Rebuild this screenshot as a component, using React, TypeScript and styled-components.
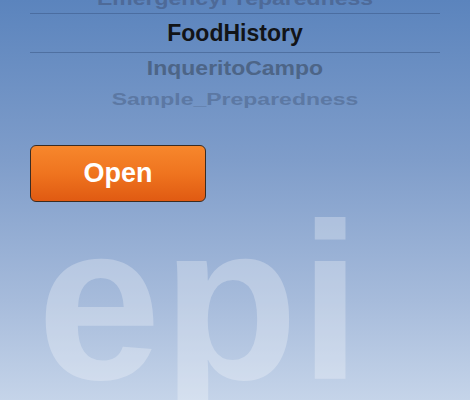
import React from "react";
import styled, { createGlobalStyle } from "styled-components";

const Global = createGlobalStyle`
  html, body { margin: 0; padding: 0; }
  body { width: 470px; height: 400px; overflow: hidden; font-family: "Liberation Sans", Arial, sans-serif; }
`;

const Screen = styled.div`
  position: relative;
  width: 470px;
  height: 400px;
  overflow: hidden;
  background: linear-gradient(180deg, #5b84bd 0%, #7f9dca 40%, #a6bbdb 75%, #c5d4e9 100%);
  display: flex;
  flex-direction: column;
`;

const Watermark = styled.div`
  position: absolute;
  left: 37px;
  top: 190px;
  font-family: "Liberation Sans", Arial, sans-serif;
  font-weight: 700;
  font-size: 223px;
  line-height: 1;
  letter-spacing: 1px;
  color: rgba(255, 255, 255, 0.28);
  pointer-events: none;
`;

const Picker = styled.div`
  position: relative;
  z-index: 1;
  margin-top: -26px;
  display: flex;
  flex-direction: column;
  align-items: stretch;
  padding: 0 30px;
`;

const Row = styled.div<{ $h: number; $scale: number; $shift?: number; $color: string; $selected?: boolean }>`
  height: ${(p) => p.$h}px;
  display: flex;
  align-items: center;
  justify-content: center;
  font-weight: 700;
  font-size: 23px;
  color: ${(p) => p.$color};
  white-space: nowrap;
  border-top: ${(p) => (p.$selected ? "1px solid rgba(60, 90, 135, 0.55)" : "none")};
  border-bottom: ${(p) => (p.$selected ? "1px solid rgba(60, 90, 135, 0.55)" : "none")};
  box-sizing: border-box;
  & > span {
    display: inline-block;
    transform: translateY(${(p) => p.$shift ?? 0}px) scaleY(${(p) => p.$scale});
  }
`;

const ButtonArea = styled.div`
  position: relative;
  z-index: 1;
  padding: 32px 0 0 30px;
`;

const OpenButton = styled.button`
  width: 176px;
  height: 57px;
  border: 1px solid #3b2c22;
  border-radius: 6px;
  background: linear-gradient(180deg, #f7872c 0%, #ef741f 50%, #e05a12 100%);
  color: #ffffff;
  font-family: "Liberation Sans", Arial, sans-serif;
  font-weight: 700;
  font-size: 27px;
  display: flex;
  align-items: center;
  justify-content: center;
  padding: 0;
  box-sizing: border-box;
`;

export default function App() {
  return (
    <Screen>
      <Global />
      <Watermark>epi</Watermark>
      <Picker>
        <Row $h={39} $scale={0.8} $shift={5} $color="#4e6a98">
          <span>EmergencyPreparedness</span>
        </Row>
        <Row $h={40} $scale={1} $color="#121417" $selected>
          <span>FoodHistory</span>
        </Row>
        <Row $h={34} $scale={0.85} $shift={-2} $color="#4d6587">
          <span>InqueritoCampo</span>
        </Row>
        <Row $h={26} $scale={0.72} $shift={-1} $color="#5c78a3">
          <span>Sample_Preparedness</span>
        </Row>
      </Picker>
      <ButtonArea>
        <OpenButton>Open</OpenButton>
      </ButtonArea>
    </Screen>
  );
}
